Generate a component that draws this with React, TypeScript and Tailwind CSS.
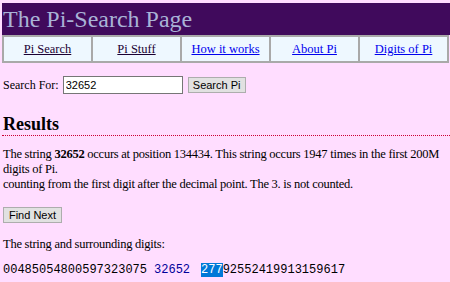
import React from 'react';

const navItems = [
  { label: 'Pi Search', visited: true },
  { label: 'Pi Stuff', visited: true },
  { label: 'How it works', visited: false },
  { label: 'About Pi', visited: false },
  { label: 'Digits of Pi', visited: false },
];

export default function App() {
  return (
    <div className="min-h-[282px] bg-[#ffddff] pt-[3px] pl-[2px] font-['Liberation_Serif',serif] text-[12.5px] text-black">
      {/* Header */}
      <div className="h-[32px] bg-[#400a5c] pl-[1px] text-[24px] leading-[32px] text-[#a9b3d6]">
        The Pi-Search Page
      </div>

      {/* Nav */}
      <div className="mr-[1px] flex h-[28px] border-2 border-[#a9a9a9] bg-[#eef8ff]">
        {navItems.map((item, i) => (
          <div
            key={item.label}
            className={`flex flex-1 items-center justify-center text-[12.5px] ${
              i > 0 ? 'border-l-2 border-[#a9a9a9]' : ''
            }`}
          >
            <a
              href="#"
              className={`underline ${item.visited ? 'text-[#1a0033]' : 'text-[#0000ee]'}`}
            >
              {item.label}
            </a>
          </div>
        ))}
      </div>

      {/* Search */}
      <div className="mt-[13px] flex items-center pl-[1px]">
        <span className="mr-[4px] text-[12px]">Search For:</span>
        <input
          defaultValue="32652"
          className="h-[18px] w-[120px] border border-[#767676] bg-white px-[2px] font-['Liberation_Sans',sans-serif] text-[11px] outline-none"
        />
        <button className="ml-[5px] h-[16px] w-[58px] border border-[#adadad] bg-[#e1e1e1] font-['Liberation_Sans',sans-serif] text-[11px] leading-[14px]">
          Search Pi
        </button>
      </div>

      {/* Results */}
      <h2 className="mt-[19px] border-b border-dotted border-[#cc0033] pl-[1px] text-[18px] font-bold leading-[22px]">
        Results
      </h2>

      <div className="mt-[11px] pl-[1px] leading-[15px]">
        <p className="whitespace-nowrap tracking-[-0.25px]">
          The string <b>32652</b> occurs at position 134434. This string occurs 1947 times in the first 200M
          <br />
          digits of Pi.
          <br />
          counting from the first digit after the decimal point. The 3. is not counted.
        </p>

        <button className="mt-[15px] h-[16px] w-[59px] border border-[#adadad] bg-[#e1e1e1] font-['Liberation_Sans',sans-serif] text-[11px] leading-[14px]">
          Find Next
        </button>

        <p className="mt-[14px] tracking-[-0.25px]">The string and surrounding digits:</p>

        <p className="mt-[11px] font-['Liberation_Mono',monospace] text-[12px]">
          00485054800597323075
          <span className="ml-[7px] text-[#000099]">32652</span>
          <span className="ml-[11px] bg-[#0078d7] text-white">277</span>
          92552419913159617
        </p>
      </div>
    </div>
  );
}
